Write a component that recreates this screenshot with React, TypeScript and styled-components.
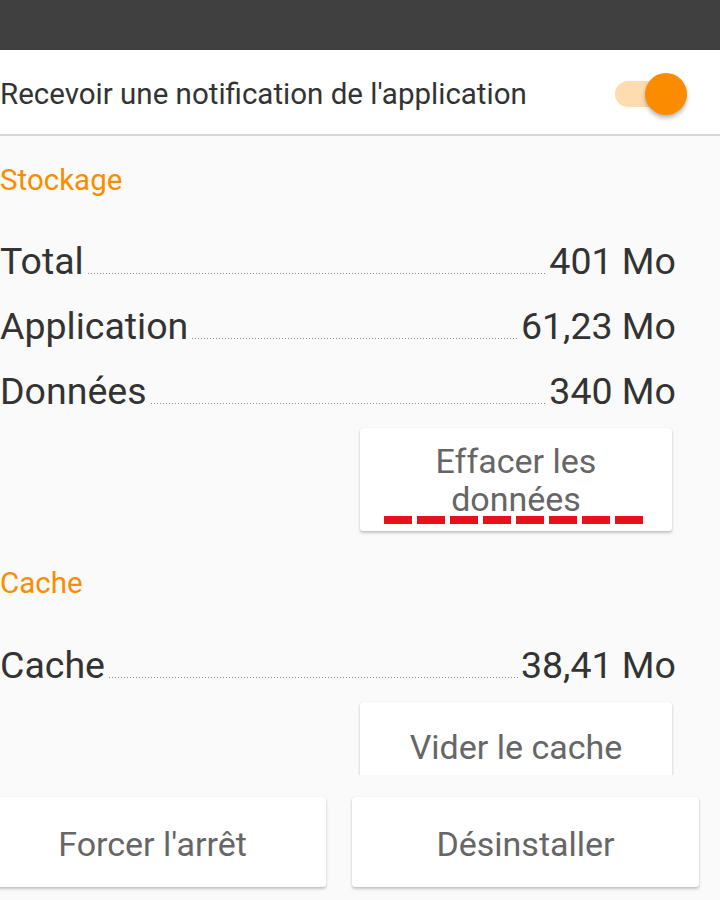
import React from "react";
import styled, { createGlobalStyle } from "styled-components";

const GlobalStyle = createGlobalStyle`
  html, body { margin: 0; padding: 0; background: #fafafa; }
  body { font-family: Roboto, "Noto Sans", sans-serif; }
  * { box-sizing: border-box; }
`;

const ORANGE = "#fb8c00";

const Screen = styled.div`
  width: 720px;
  height: 900px;
  display: flex;
  flex-direction: column;
  background: #fafafa;
  overflow: hidden;
`;

const StatusBar = styled.div`
  height: 50px;
  flex: none;
  background: #404040;
`;

const NotifRow = styled.div`
  height: 86px;
  flex: none;
  display: flex;
  align-items: center;
  justify-content: space-between;
  background: #ffffff;
  border-bottom: 2px solid #d6d6d6;
  padding: 4px 43px 0 0;
`;

const NotifLabel = styled.span`
  font-size: 29.5px;
  color: #333333;
`;

const SwitchTrack = styled.div`
  position: relative;
  width: 62px;
  height: 26px;
  border-radius: 13px;
  background: #fedcb0;
`;

const SwitchThumb = styled.div`
  position: absolute;
  right: -10px;
  top: -8px;
  width: 42px;
  height: 42px;
  border-radius: 50%;
  background: ${ORANGE};
  box-shadow: 0 3px 4px rgba(0, 0, 0, 0.28);
`;

const Scroll = styled.div`
  flex: 1;
  overflow: hidden;
  padding: 0 44px 0 0;
  display: flex;
  flex-direction: column;
`;

const SectionTitle = styled.div<{ $top: number }>`
  font-size: 29.5px;
  color: ${ORANGE};
  margin-top: ${(p) => p.$top}px;
  line-height: 34px;
`;

const Rows = styled.div<{ $top: number }>`
  margin-top: ${(p) => p.$top}px;
  display: flex;
  flex-direction: column;
  gap: 21px;
`;

const InfoRow = styled.div`
  display: flex;
  align-items: baseline;
  font-size: 37.5px;
  line-height: 44px;
  color: #333333;
`;

const Leader = styled.span`
  flex: 1;
  height: 1px;
  margin: 0 3px 0 4px;
  background-image: linear-gradient(to right, #8a8a8a 1px, transparent 1px);
  background-size: 3px 1px;
  background-repeat: repeat-x;
`;

const ButtonRow = styled.div<{ $top: number }>`
  display: flex;
  justify-content: flex-end;
  padding-right: 4px;
  margin-top: ${(p) => p.$top}px;
`;

const CardButton = styled.div<{ $h: number }>`
  position: relative;
  width: 312px;
  height: ${(p) => p.$h}px;
  flex: none;
  background: #ffffff;
  border-radius: 3px;
  box-shadow: 0 2px 3px rgba(0, 0, 0, 0.22), 0 0 1px rgba(0, 0, 0, 0.12);
  display: flex;
  align-items: center;
  justify-content: center;
  text-align: center;
  font-size: 34px;
  line-height: 38px;
  color: #666666;
  padding: 0 20px;
`;

const DashMark = styled.span`
  position: absolute;
  left: 24px;
  top: 88px;
  width: 260px;
  height: 8px;
  background-image: linear-gradient(to right, #e8101a 28px, transparent 28px);
  background-size: 33px 8px;
  background-repeat: repeat-x;
`;

const Footer = styled.div`
  height: 125px;
  flex: none;
  display: flex;
  gap: 26px;
  margin-left: -21px;
  padding: 22px 0 0 0;
`;

const FooterButton = styled.div`
  width: 347px;
  height: 90px;
  flex: none;
  background: #ffffff;
  border-radius: 3px;
  box-shadow: 0 2px 3px rgba(0, 0, 0, 0.22), 0 0 1px rgba(0, 0, 0, 0.12);
  display: flex;
  align-items: center;
  justify-content: center;
  padding-top: 4px;
  font-size: 34px;
  color: #666666;
`;

const storage = [
  { label: "Total", value: "401 Mo" },
  { label: "Application", value: "61,23 Mo" },
  { label: "Données", value: "340 Mo" },
];

export default function App() {
  return (
    <>
      <GlobalStyle />
      <Screen>
        <StatusBar />
        <NotifRow>
          <NotifLabel>Recevoir une notification de l'application</NotifLabel>
          <SwitchTrack>
            <SwitchThumb />
          </SwitchTrack>
        </NotifRow>
        <Scroll>
          <SectionTitle $top={27}>Stockage</SectionTitle>
          <Rows $top={42}>
            {storage.map((r) => (
              <InfoRow key={r.label}>
                <span>{r.label}</span>
                <Leader />
                <span>{r.value}</span>
              </InfoRow>
            ))}
          </Rows>
          <ButtonRow $top={15}>
            <CardButton $h={103}>
              Effacer les données
              <DashMark />
            </CardButton>
          </ButtonRow>
          <SectionTitle $top={35}>Cache</SectionTitle>
          <Rows $top={43}>
            <InfoRow>
              <span>Cache</span>
              <Leader />
              <span>38,41 Mo</span>
            </InfoRow>
          </Rows>
          <ButtonRow $top={15}>
            <CardButton $h={90}>Vider le cache</CardButton>
          </ButtonRow>
        </Scroll>
        <Footer>
          <FooterButton>Forcer l'arrêt</FooterButton>
          <FooterButton>Désinstaller</FooterButton>
        </Footer>
      </Screen>
    </>
  );
}
